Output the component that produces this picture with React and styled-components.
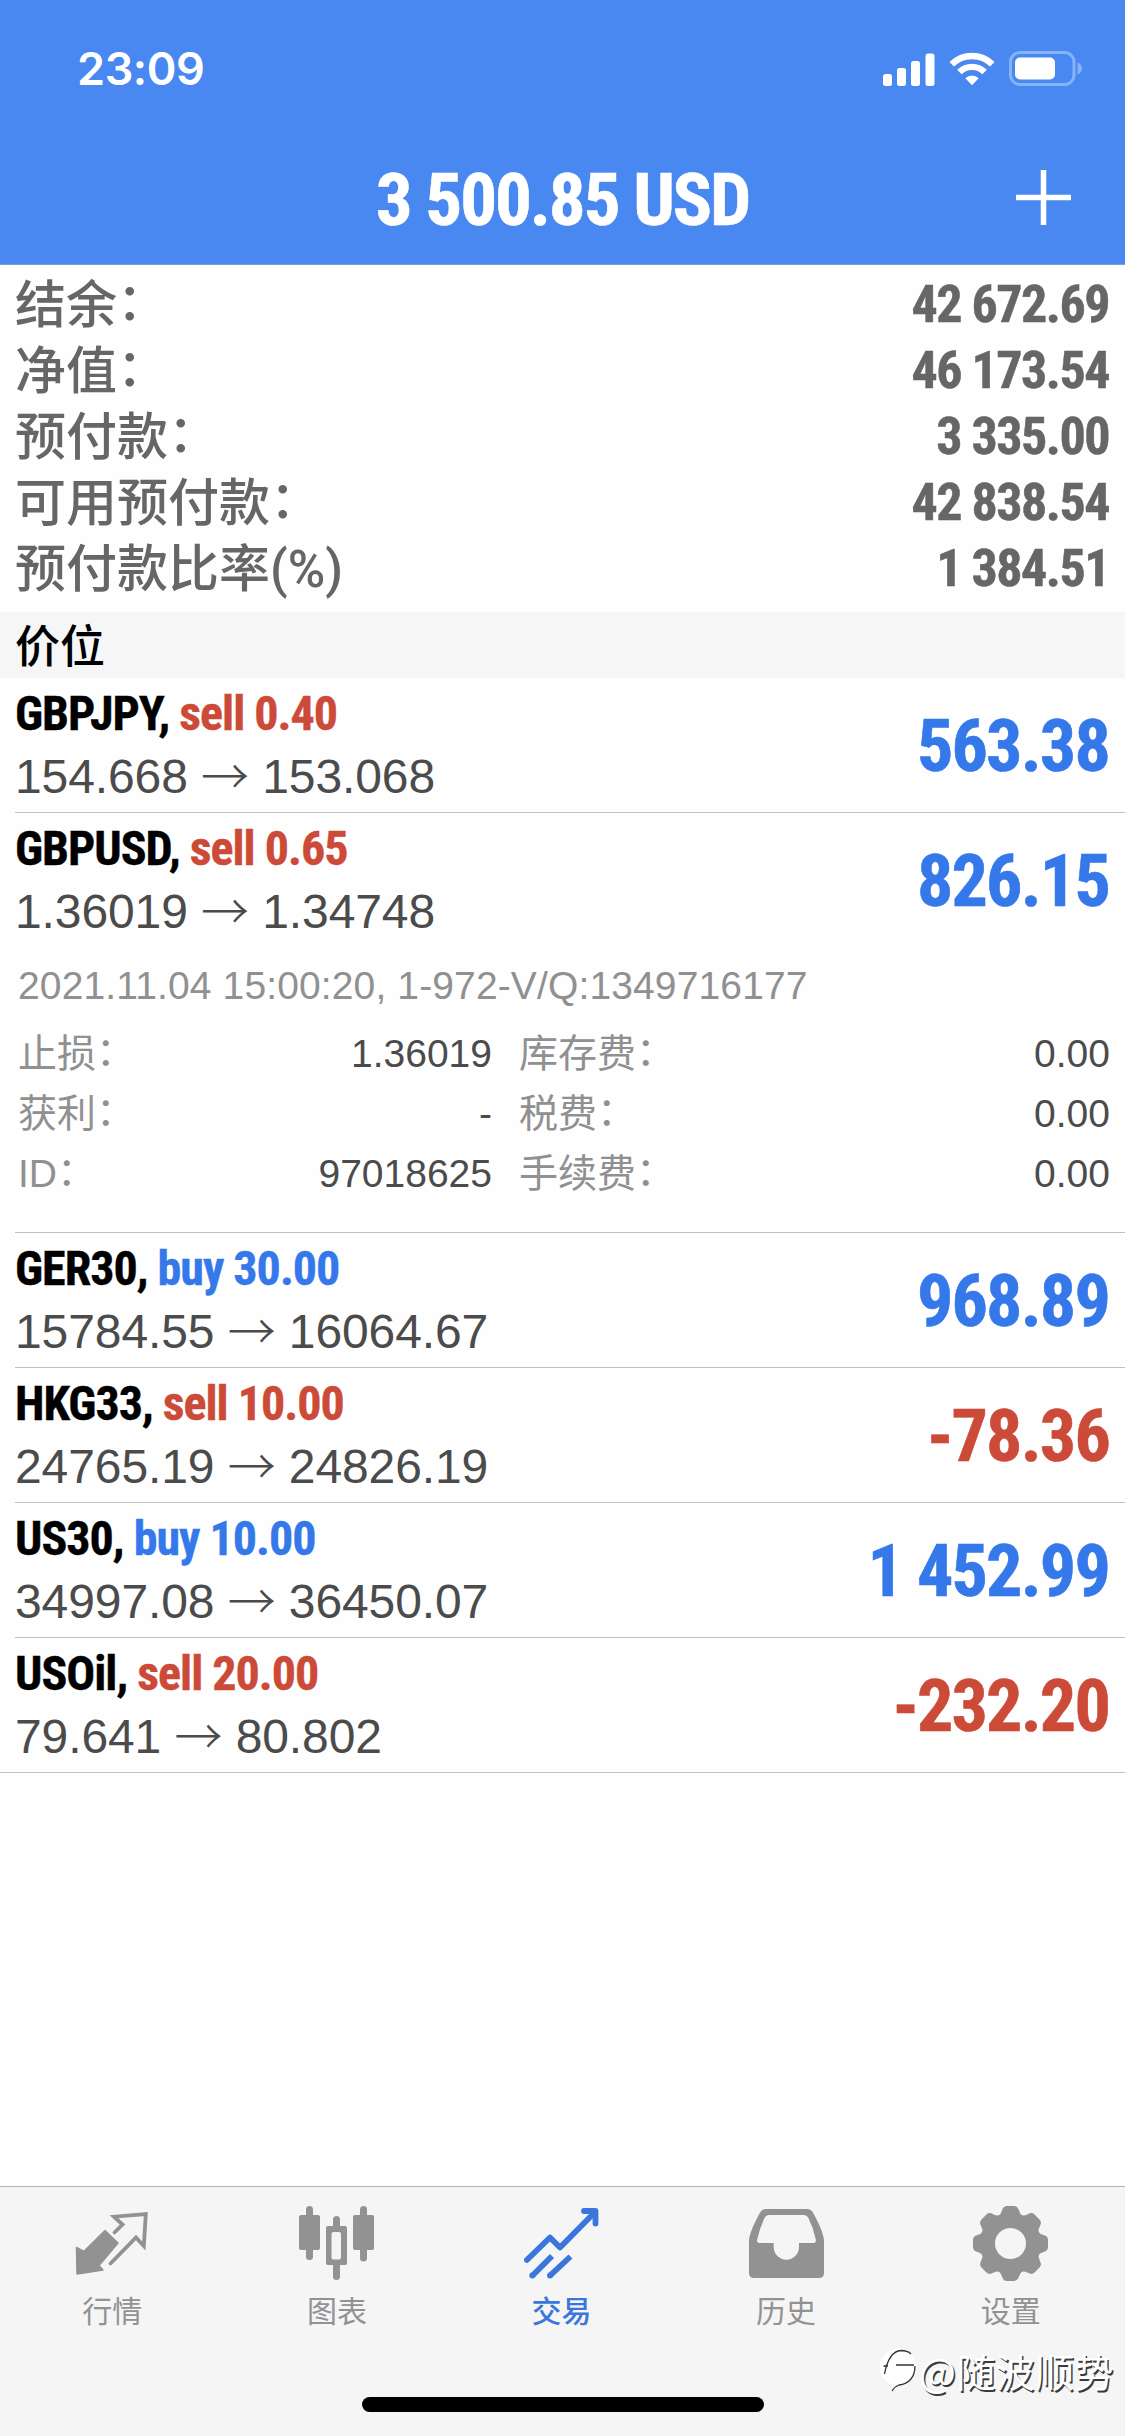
import React from 'react';
import styled, { createGlobalStyle } from 'styled-components';

const BLUE = '#3478ea';
const RED = '#cc4a38';
const CONDENSED = "'Roboto Condensed', Roboto, 'Liberation Sans', sans-serif";
const CJK = "'Noto Sans CJK SC', sans-serif";

const GlobalStyle = createGlobalStyle`
  * {
    box-sizing: border-box;
  }

  body {
    margin: 0;
    background: #fefefe;
    font-family: 'Liberation Sans', 'Noto Sans CJK SC', sans-serif;
  }
`;

const Screen = styled.div`
  position: relative;
  display: flex;
  flex-direction: column;
  width: 1125px;
  height: 2436px;
  overflow: hidden;
  background: #fefefe;
`;

const Header = styled.header`
  height: 265px;
  flex: none;
  color: #fff;
  background: #4888f0;
  border-bottom: 1px solid #7f9fcf;
`;

const StatusBar = styled.div`
  display: flex;
  justify-content: space-between;
  align-items: center;
  height: 132px;
  padding: 6px 42px 0 77px;
`;

const Clock = styled.span`
  font-family: Inter, sans-serif;
  font-size: 45px;
  font-weight: 600;
  line-height: 60px;
  letter-spacing: -0.4px;
`;

const StatusIcons = styled.div`
  display: flex;
  align-items: center;
  gap: 14px;
`;

const NavBar = styled.div`
  display: grid;
  grid-template-columns: 1fr auto 1fr;
  align-items: center;
  height: 132px;
  padding: 0 54px;
`;

const Title = styled.h1`
  grid-column: 2;
  margin: 0;
  padding-top: 3px;
  font-family: ${CONDENSED};
  font-stretch: 75%;
  font-size: 73px;
  font-weight: 700;
  line-height: 90px;
  letter-spacing: -2.1px;
  -webkit-text-stroke: 0.6px;
`;

const AddButton = styled.button`
  justify-self: end;
  display: flex;
  padding: 0 0 2px;
  border: 0;
  color: inherit;
  background: none;
`;

const Summary = styled.dl`
  flex: none;
  height: 347px;
  margin: 0;
  padding: 3px 15px 0;
`;

const SummaryRow = styled.div`
  display: flex;
  justify-content: space-between;
  height: 66px;
  color: #666;
  line-height: 66px;
`;

const SummaryLabel = styled.dt`
  font-family: ${CJK};
  font-size: 51px;
  font-weight: 500;
`;

const Unit = styled.span`
  font-family: Roboto, sans-serif;
  font-stretch: 88%;
  font-weight: 500;
  line-height: 1;
`;

const SummaryValue = styled.dd`
  margin: 0;
  padding: 4px 1px 0 0;
  font-family: ${CONDENSED};
  font-stretch: 75%;
  font-size: 52px;
  font-weight: 700;
  letter-spacing: -1.5px;
  -webkit-text-stroke: 0.5px;
`;

const Colon = styled.span`
  vertical-align: 0.06em;
  line-height: 1;
`;

const SectionTitle = styled.h2`
  flex: none;
  height: 66px;
  margin: 0;
  padding-left: 15px;
  font-family: ${CJK};
  font-size: 45px;
  font-weight: 500;
  line-height: 64px;
  background: #f6f6f6;
`;

const Positions = styled.ul`
  flex: 1;
  margin: 0;
  padding: 0;
  list-style: none;
`;

const Position = styled.li`
  margin-left: 15px;
  border-bottom: 1px solid #bfc0c1;

  &:last-child {
    margin-left: 0;
    padding-left: 15px;
  }
`;

const Trade = styled.div`
  display: flex;
  justify-content: space-between;
  align-items: center;
  height: 134px;
  padding-right: 15px;
`;

const Symbol = styled.div`
  font-family: ${CONDENSED};
  font-stretch: 75%;
  font-size: 48px;
  font-weight: 700;
  line-height: 64px;
  letter-spacing: -1px;
  color: #000;
  -webkit-text-stroke: 0.4px;
`;

const Side = styled.span`
  color: ${(p) => (p.$buy ? BLUE : RED)};
`;

const Prices = styled.div`
  font-size: 48px;
  line-height: 62px;
  letter-spacing: -0.1px;
  color: #4b4b4b;
`;

const Arrow = styled.span`
  font-family: ${CJK};
  font-weight: 300;
  line-height: 1;
  vertical-align: -1px;
`;

const Profit = styled.div`
  padding: 3px 1px 0 0;
  font-family: ${CONDENSED};
  font-stretch: 75%;
  font-size: 72px;
  font-weight: 700;
  letter-spacing: -1.8px;
  color: ${(p) => (p.$loss ? RED : BLUE)};
  -webkit-text-stroke: 0.6px;
`;

const Details = styled.div`
  height: 285px;
  padding: 1px 15px 0 3px;
  font-size: 39px;
`;

const Comment = styled.div`
  line-height: 76px;
  letter-spacing: 0.13px;
  color: #909090;
`;

const DetailGrid = styled.div`
  display: grid;
  grid-template-columns: 474px 1fr;
  column-gap: 27px;
`;

const DetailRow = styled.div`
  display: flex;
  justify-content: space-between;
  line-height: 60px;
  color: #4b4b4b;
`;

const DetailLabel = styled.span`
  font-family: 'Liberation Sans', ${CJK};
  color: #909090;
`;

const TabBar = styled.nav`
  display: flex;
  flex: none;
  height: 250px;
  padding-right: 2px;
  background: #f5f5f5;
  border-top: 1px solid #b3b3b3;
`;

const Tab = styled.a`
  display: flex;
  flex: 1;
  flex-direction: column;
  align-items: center;
  padding-top: 19px;
  color: ${(p) => (p.$active ? '#3b76dc' : '#929292')};
`;

const TabLabel = styled.span`
  margin-top: 6px;
  font-family: ${CJK};
  font-size: 30px;
  font-weight: ${(p) => (p.$active ? 500 : 400)};
  line-height: 44px;
`;

const HomeIndicator = styled.div`
  position: absolute;
  bottom: 24px;
  left: 362px;
  width: 402px;
  height: 15px;
  border-radius: 8px;
  background: #000;
`;

const Watermark = styled.div`
  position: absolute;
  right: 11px;
  bottom: 38px;
  display: flex;
  align-items: center;
  font-family: ${CJK};
  font-size: 39px;
  line-height: 56px;
  letter-spacing: 0.4px;
  color: #fff;
  text-shadow: 1.5px 1.5px 0 #3a3a3a;
`;

const SignalIcon = () => (
  <svg width="52" height="33" viewBox="0 0 52 33" fill="#fff">
    <rect x="0" y="21" width="9" height="12" rx="2.5" />
    <rect x="14" y="15" width="9" height="18" rx="2.5" />
    <rect x="28" y="8" width="9" height="25" rx="2.5" />
    <rect x="42.5" y="0.5" width="9" height="32.5" rx="2.5" />
  </svg>
);

const WifiIcon = () => (
  <svg width="46" height="34" viewBox="0 0 46 34" fill="none" stroke="#fff" strokeWidth="6.4">
    <path d="M2.7 12.3a29 29 0 0 1 40.6 0" />
    <path d="M10.4 20a18 18 0 0 1 25.2 0" />
    <path d="M16.3 26.3a9.6 9.6 0 0 1 13.4 0L23 33.2z" fill="#fff" stroke="none" />
  </svg>
);

const BatteryIcon = () => (
  <svg width="74" height="36" viewBox="0 0 74 36">
    <rect x="1.5" y="1.5" width="63.5" height="32" rx="9.5" fill="none" stroke="#86b3f8" strokeWidth="3" />
    <rect x="6" y="6.5" width="40" height="22" rx="5" fill="#fff" />
    <path d="M68.5 11.5c3 1 4.5 3.4 4.5 6s-1.5 5-4.5 6z" fill="#86b3f8" />
  </svg>
);

const PlusIcon = () => (
  <svg width="55" height="55" viewBox="0 0 55 55" stroke="currentColor" strokeWidth="5.5">
    <path d="M27.5 0v55M0 27.5h55" />
  </svg>
);

const QuotesIcon = () => (
  <svg width="75" height="75" viewBox="0 0 75 75">
    <path
      d="M1.5 41.5L8.8 45.5L30 24.5L43 37L24 59.5L28 64L2 68z"
      fill="currentColor"
      stroke="currentColor"
      strokeWidth="1.5"
      strokeLinejoin="round"
    />
    <path
      d="M39.5 26.5L47.5 18.5L39 10.7L70.8 8L68.8 40L61 31.5L35.5 57.5"
      fill="none"
      stroke="currentColor"
      strokeWidth="3.8"
      strokeLinecap="round"
    />
  </svg>
);

const ChartIcon = () => (
  <svg width="75" height="75" viewBox="0 0 75 75" fill="currentColor">
    <rect x="0" y="9" width="21" height="35" rx="2" />
    <rect x="7" y="0" width="7" height="54" rx="3.5" />
    <rect x="54" y="9" width="21" height="35" rx="2" />
    <rect x="61" y="0" width="7" height="55.5" rx="3.5" />
    <rect x="34" y="10" width="7" height="14" rx="3.5" />
    <rect x="34" y="56" width="7" height="18" rx="3.5" />
    <path
      fillRule="evenodd"
      d="M29 20h17a2 2 0 0 1 2 2v35a2 2 0 0 1-2 2H29a2 2 0 0 1-2-2V22a2 2 0 0 1 2-2zM34.5 26a2 2 0 0 0-2 2v23.5a2 2 0 0 0 2 2h5.5a2 2 0 0 0 2-2V28a2 2 0 0 0-2-2z"
    />
  </svg>
);

const TradeIcon = () => (
  <svg
    width="75"
    height="75"
    viewBox="0 0 75 75"
    fill="none"
    stroke="currentColor"
    strokeWidth="5.8"
    strokeLinejoin="round"
  >
    <path strokeLinecap="round" d="M2.9 54L26 31.5L36 41.5L71 6" />
    <path strokeLinecap="round" d="M60 5H71.5V17.5" />
    <path d="M8.3 69.7L28 50M26 69.7L46.5 50.5" />
    <circle cx="8.3" cy="69.5" r="1.5" strokeWidth="3" />
    <circle cx="26" cy="69.5" r="1.5" strokeWidth="3" />
  </svg>
);

const HistoryIcon = () => (
  <svg width="75" height="75" viewBox="0 0 75 75" fill="currentColor">
    <path
      fillRule="evenodd"
      d="M17 3H58Q62.5 3 64.5 7.5Q75 27 75 35V67Q75 72 70 72H5Q0 72 0 67V35Q0 27 10.5 7.5Q12.5 3 17 3zM20 9Q17 9 15.8 11.5Q10.5 22 8.2 33.5Q7.5 37 10.5 37H24.7V41A12.6 12.6 0 0 0 50 41V37H64.5Q67.5 37 66.8 33.5Q64.5 22 59.2 11.5Q58 9 55 9z"
    />
  </svg>
);

const teeth = [0, 45, 90, 135, 180, 225, 270, 315];

const SettingsIcon = () => (
  <svg width="75" height="75" viewBox="-37.5 -37.5 75 75" fill="currentColor">
    <circle r="22.5" fill="none" stroke="currentColor" strokeWidth="14" />
    {teeth.map((angle) => (
      <path
        key={angle}
        transform={`rotate(${angle})`}
        d="M-12.5 -27.5Q-9.5 -29 -8.5 -33Q-7.3 -37.5 -3.5 -37.5H3.5Q7.3 -37.5 8.5 -33Q9.5 -29 12.5 -27.5L8 -22H-8z"
      />
    ))}
  </svg>
);

const WatermarkLogo = () => (
  <svg width="40" height="46" viewBox="0 0 40 46">
    <circle cx="19" cy="20" r="18.5" fill="#fff" />
    <path
      d="M5.5 27C8 14 13 4 22 3.5C27 3.5 30 5 32 7M4.5 19H9M17 18H35M36 19C36 30 30 37 20 38C17 39 15 41 13 44"
      fill="none"
      stroke="#333"
      strokeWidth="1.3"
    />
  </svg>
);

const summary = [
  { label: '结余', value: '42 672.69' },
  { label: '净值', value: '46 173.54' },
  { label: '预付款', value: '3 335.00' },
  { label: '可用预付款', value: '42 838.54' },
  { label: '预付款比率', unit: '(%)', value: '1 384.51' },
];

const positions = [
  { symbol: 'GBPJPY', side: 'sell', volume: '0.40', open: '154.668', current: '153.068', profit: '563.38' },
  {
    symbol: 'GBPUSD',
    side: 'sell',
    volume: '0.65',
    open: '1.36019',
    current: '1.34748',
    profit: '826.15',
    comment: '2021.11.04 15:00:20, 1-972-V/Q:1349716177',
    details: [
      ['止损', '1.36019'],
      ['库存费', '0.00'],
      ['获利', '-'],
      ['税费', '0.00'],
      ['ID', '97018625'],
      ['手续费', '0.00'],
    ],
  },
  { symbol: 'GER30', side: 'buy', volume: '30.00', open: '15784.55', current: '16064.67', profit: '968.89' },
  { symbol: 'HKG33', side: 'sell', volume: '10.00', open: '24765.19', current: '24826.19', profit: '-78.36' },
  { symbol: 'US30', side: 'buy', volume: '10.00', open: '34997.08', current: '36450.07', profit: '1 452.99' },
  { symbol: 'USOil', side: 'sell', volume: '20.00', open: '79.641', current: '80.802', profit: '-232.20' },
];

const tabs = [
  { label: '行情', Icon: QuotesIcon },
  { label: '图表', Icon: ChartIcon },
  { label: '交易', Icon: TradeIcon, active: true },
  { label: '历史', Icon: HistoryIcon },
  { label: '设置', Icon: SettingsIcon },
];

const PositionItem = ({ position }) => (
  <Position>
    <Trade>
      <div>
        <Symbol>
          {position.symbol},{' '}
          <Side $buy={position.side === 'buy'}>
            {position.side} {position.volume}
          </Side>
        </Symbol>
        <Prices>
          {position.open} <Arrow>→</Arrow> {position.current}
        </Prices>
      </div>
      <Profit $loss={position.profit.startsWith('-')}>{position.profit}</Profit>
    </Trade>
    {position.details && (
      <Details>
        <Comment>{position.comment}</Comment>
        <DetailGrid>
          {position.details.map(([label, value]) => (
            <DetailRow key={label}>
              <DetailLabel>
                {label}
                <Colon>：</Colon>
              </DetailLabel>
              <span>{value}</span>
            </DetailRow>
          ))}
        </DetailGrid>
      </Details>
    )}
  </Position>
);

export default function App() {
  return (
    <Screen>
      <GlobalStyle />
      <Header>
        <StatusBar>
          <Clock>23:09</Clock>
          <StatusIcons>
            <SignalIcon />
            <WifiIcon />
            <BatteryIcon />
          </StatusIcons>
        </StatusBar>
        <NavBar>
          <Title>3 500.85 USD</Title>
          <AddButton aria-label="add">
            <PlusIcon />
          </AddButton>
        </NavBar>
      </Header>

      <Summary>
        {summary.map(({ label, unit, value }) => (
          <SummaryRow key={label}>
            <SummaryLabel>
              {label}
              {unit ? <Unit>{unit}</Unit> : <Colon>：</Colon>}
            </SummaryLabel>
            <SummaryValue>{value}</SummaryValue>
          </SummaryRow>
        ))}
      </Summary>

      <SectionTitle>价位</SectionTitle>
      <Positions>
        {positions.map((position) => (
          <PositionItem key={position.symbol} position={position} />
        ))}
      </Positions>

      <TabBar>
        {tabs.map(({ label, Icon, active }) => (
          <Tab key={label} $active={active}>
            <Icon />
            <TabLabel $active={active}>{label}</TabLabel>
          </Tab>
        ))}
      </TabBar>
      <HomeIndicator />
      <Watermark>
        <WatermarkLogo />
        @随波顺势
      </Watermark>
    </Screen>
  );
}
